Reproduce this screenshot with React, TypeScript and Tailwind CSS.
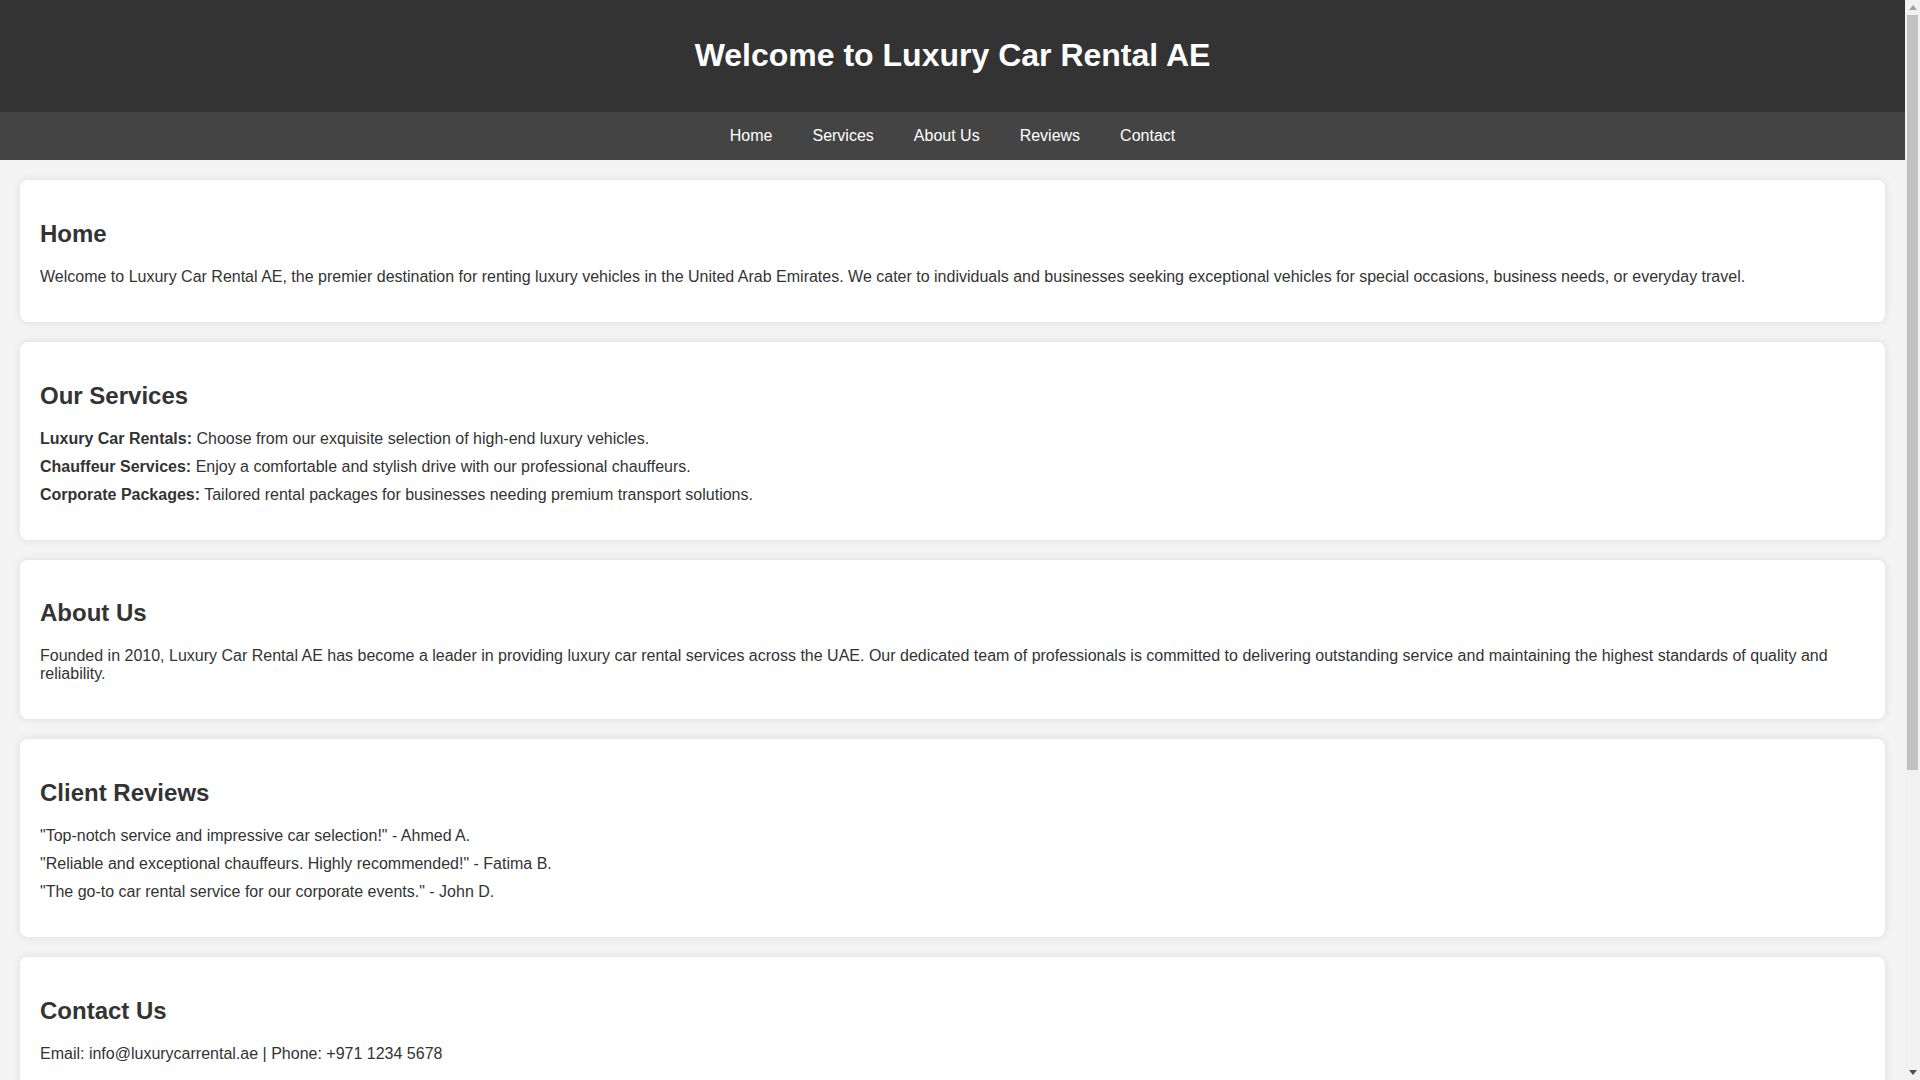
export default function App() {
  const services = [
    ['Luxury Car Rentals:', 'Choose from our exquisite selection of high-end luxury vehicles.'],
    ['Chauffeur Services:', 'Enjoy a comfortable and stylish drive with our professional chauffeurs.'],
    ['Corporate Packages:', 'Tailored rental packages for businesses needing premium transport solutions.'],
  ]

  const reviews = [
    '"Top-notch service and impressive car selection!" - Ahmed A.',
    '"Reliable and exceptional chauffeurs. Highly recommended!" - Fatima B.',
    '"The go-to car rental service for our corporate events." - John D.',
  ]

  return (
    <div className="flex h-screen overflow-hidden bg-[#f4f4f4] font-['Liberation_Sans',Arial,sans-serif] text-base leading-[normal] text-[#333]">
      <div className="min-w-0 flex-1 overflow-hidden">
        <header className="bg-[#333] py-4 text-center text-white">
          <h1 className="my-[21.44px] text-[32px] font-bold">Welcome to Luxury Car Rental AE</h1>
        </header>

        <nav className="flex justify-center gap-10 bg-[#444] py-[15px]">
          <a href="#home" className="text-white">Home</a>
          <a href="#services" className="text-white">Services</a>
          <a href="#about" className="text-white">About Us</a>
          <a href="#reviews" className="text-white">Reviews</a>
          <a href="#contact" className="text-white">Contact</a>
        </nav>

        <main className="flex flex-col gap-5 p-5">
          <section id="home" className="rounded-lg bg-white p-5 shadow-[0_0_10px_rgba(0,0,0,0.1)]">
            <h2 className="my-[19.92px] text-[24px] font-bold">Home</h2>
            <p className="my-4">
              Welcome to Luxury Car Rental AE, the premier destination for renting luxury vehicles in the United Arab Emirates. We cater to individuals and businesses seeking exceptional vehicles for special occasions, business needs, or everyday travel.
            </p>
          </section>

          <section id="services" className="rounded-lg bg-white p-5 shadow-[0_0_10px_rgba(0,0,0,0.1)]">
            <h2 className="my-[19.92px] text-[24px] font-bold">Our Services</h2>
            <ul className="my-4 list-none pl-0">
              {services.map(([title, text]) => (
                <li key={title} className="mb-[10px]">
                  <strong className="font-bold">{title}</strong> {text}
                </li>
              ))}
            </ul>
          </section>

          <section id="about" className="rounded-lg bg-white p-5 shadow-[0_0_10px_rgba(0,0,0,0.1)]">
            <h2 className="my-[19.92px] text-[24px] font-bold">About Us</h2>
            <p className="my-4">
              Founded in 2010, Luxury Car Rental AE has become a leader in providing luxury car rental services across the UAE. Our dedicated team of professionals is committed to delivering outstanding service and maintaining the highest standards of quality and reliability.
            </p>
          </section>

          <section id="reviews" className="rounded-lg bg-white p-5 shadow-[0_0_10px_rgba(0,0,0,0.1)]">
            <h2 className="my-[19.92px] text-[24px] font-bold">Client Reviews</h2>
            <ul className="my-4 list-none pl-0">
              {reviews.map((r) => (
                <li key={r} className="mb-[10px]">{r}</li>
              ))}
            </ul>
          </section>

          <section id="contact" className="rounded-lg bg-white p-5 shadow-[0_0_10px_rgba(0,0,0,0.1)]">
            <h2 className="my-[19.92px] text-[24px] font-bold">Contact Us</h2>
            <p className="my-4">Email: info@luxurycarrental.ae | Phone: +971 1234 5678</p>
          </section>
        </main>
      </div>

      {/* window scrollbar */}
      <div className="flex w-[15px] shrink-0 flex-col bg-[#f1f1f1]">
        <div className="flex h-[15px] items-center justify-center">
          <svg width="8" height="5" viewBox="0 0 8 5">
            <path d="M0 5 L4 0 L8 5 Z" fill="#a3a3a3" />
          </svg>
        </div>
        <div className="mx-[2px] h-[755px] bg-[#c1c1c1]" />
        <div className="flex-1" />
        <div className="flex h-[15px] items-center justify-center">
          <svg width="8" height="5" viewBox="0 0 8 5">
            <path d="M0 0 L8 0 L4 5 Z" fill="#505050" />
          </svg>
        </div>
      </div>
    </div>
  )
}
